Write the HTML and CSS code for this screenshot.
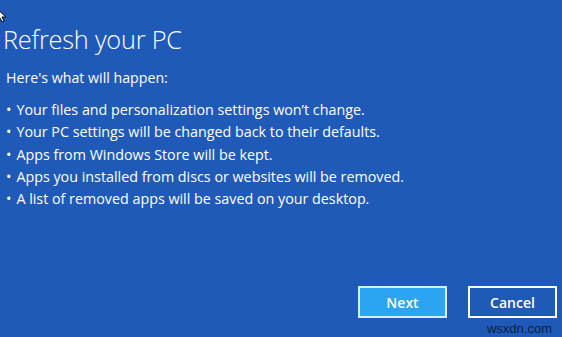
FILE: index.html
```html
<!DOCTYPE html>
<html>
<head>
<meta charset="utf-8">
<link rel="stylesheet" href="styles.css">
</head>
<body>
<svg class="cursor" width="8" height="14" viewBox="0 0 8 14"><path d="M-4 0 L6 9 L2 9 L4 13 L2 14 L0 10 L-4 13 Z" fill="#fff" stroke="#000" stroke-width="1"/></svg>
<main class="page">
  <h1 class="title">Refresh your PC</h1>
  <p class="intro">Here's what will happen:</p>
  <ul class="list">
    <li>Your files and personalization settings won’t change.</li>
    <li>Your PC settings will be changed back to their defaults.</li>
    <li>Apps from Windows Store will be kept.</li>
    <li>Apps you installed from discs or websites will be removed.</li>
    <li>A list of removed apps will be saved on your desktop.</li>
  </ul>
  <div class="actions">
    <button class="btn btn-primary">Next</button>
    <button class="btn btn-secondary">Cancel</button>
  </div>
  <div class="watermark">wsxdn.com</div>
</main>
</body>
</html>
```
FILE: styles.css
```css
html, body {
  margin: 0;
  padding: 0;
  width: 562px;
  height: 337px;
  overflow: hidden;
  background: #1f5ab9;
}
body {
  position: relative;
  font-family: "Open Sans", "Noto Sans", sans-serif;
  color: #fff;
}
.cursor {
  position: absolute;
  left: 0;
  top: 8px;
}
.page {
  display: flex;
  flex-direction: column;
  height: 337px;
  box-sizing: border-box;
  padding: 22px 0 0 3px;
}
.title {
  margin: 0;
  font-size: 25.3px;
  font-weight: 300;
  line-height: 34px;
  letter-spacing: -0.2px;
}
.intro {
  margin: 11px 0 0 3px;
  font-size: 14.2px;
  line-height: 22px;
}
.list {
  list-style: none;
  margin: 10px 0 0 3px;
  padding: 0;
  font-size: 14.3px;
  line-height: 22.3px;
}
.list li::before {
  content: "•";
  margin-right: 5px;
}
.actions {
  margin-top: auto;
  display: flex;
  justify-content: flex-end;
  gap: 21px;
  padding-right: 5px;
}
.btn {
  width: 89px;
  height: 32px;
  box-sizing: border-box;
  border: 2px solid #fff;
  font-family: inherit;
  font-size: 14px;
  font-weight: 600;
  color: #fff;
  padding: 0;
}
.btn-primary {
  background: #2ba4f2;
  border-color: #d8eefc;
}
.btn-secondary {
  background: #1f5ab9;
}
.watermark {
  align-self: flex-end;
  margin: 3px 10px 1px 0;
  font-family: "Liberation Sans", sans-serif;
  font-size: 13px;
  line-height: 15px;
  color: #0b1f3f;
}
```
